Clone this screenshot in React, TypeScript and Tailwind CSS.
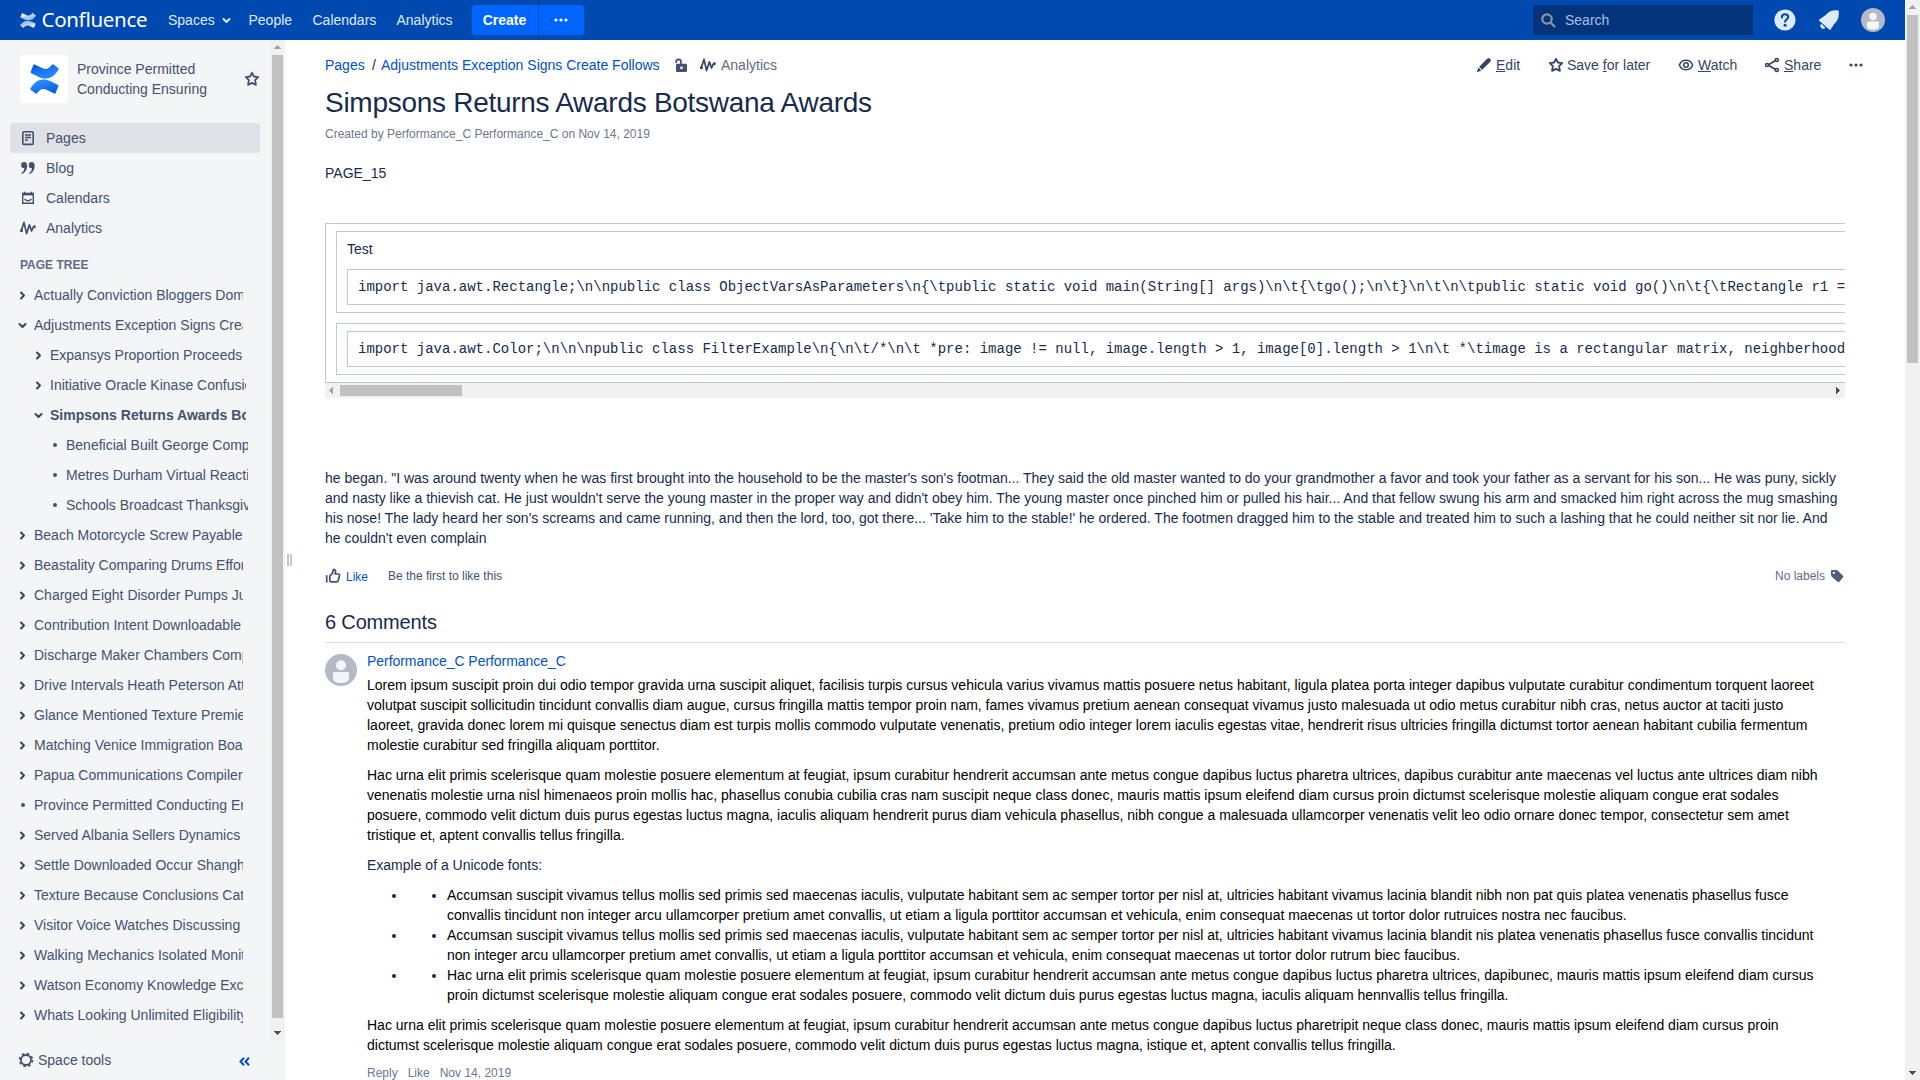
import type { ReactNode } from "react";

type Level = 1 | 2 | 3;
type Mark = "closed" | "open" | "dot";
const tree: [Level, Mark, string][] = [
  [1, "closed", "Actually Conviction Bloggers Domain"],
  [1, "open", "Adjustments Exception Signs Create Follows"],
  [2, "closed", "Expansys Proportion Proceeds"],
  [2, "closed", "Initiative Oracle Kinase Confusion"],
  [2, "open", "Simpsons Returns Awards Botswana Awards"],
  [3, "dot", "Beneficial Built George Computer"],
  [3, "dot", "Metres Durham Virtual Reaction"],
  [3, "dot", "Schools Broadcast Thanksgiving"],
  [1, "closed", "Beach Motorcycle Screw Payable"],
  [1, "closed", "Beastality Comparing Drums Efforts"],
  [1, "closed", "Charged Eight Disorder Pumps June"],
  [1, "closed", "Contribution Intent Downloadable"],
  [1, "closed", "Discharge Maker Chambers Compare"],
  [1, "closed", "Drive Intervals Heath Peterson Attach"],
  [1, "closed", "Glance Mentioned Texture Premier"],
  [1, "closed", "Matching Venice Immigration Board"],
  [1, "closed", "Papua Communications Compiler"],
  [1, "dot", "Province Permitted Conducting Ensuring"],
  [1, "closed", "Served Albania Sellers Dynamics"],
  [1, "closed", "Settle Downloaded Occur Shanghai"],
  [1, "closed", "Texture Because Conclusions Catalog"],
  [1, "closed", "Visitor Voice Watches Discussing"],
  [1, "closed", "Walking Mechanics Isolated Monitor"],
  [1, "closed", "Watson Economy Knowledge Exchange"],
  [1, "closed", "Whats Looking Unlimited Eligibility"],
];

const code1 =
  "import java.awt.Rectangle;\\n\\npublic class ObjectVarsAsParameters\\n{\\tpublic static void main(String[] args)\\n\\t{\\tgo();\\n\\t}\\n\\t\\n\\tpublic static void go()\\n\\t{\\tRectangle r1 = new Rectangle(0,0,5,5);";
const code2 =
  "import java.awt.Color;\\n\\n\\npublic class FilterExample\\n{\\n\\t/*\\n\\t *pre: image != null, image.length > 1, image[0].length > 1\\n\\t *\\timage is a rectangular matrix, neighberhoodSize > 0";

const intro = [
  "he began. \"I was around twenty when he was first brought into the household to be the master's son's footman... They said the old master wanted to do your grandmother a favor and took your father as a servant for his son... He was puny, sickly",
  "and nasty like a thievish cat. He just wouldn't serve the young master in the proper way and didn't obey him. The young master once pinched him or pulled his hair... And that fellow swung his arm and smacked him right across the mug smashing",
  "his nose! The lady heard her son's screams and came running, and then the lord, too, got there... 'Take him to the stable!' he ordered. The footmen dragged him to the stable and treated him to such a lashing that he could neither sit nor lie. And",
  "he couldn't even complain",
];
const para1 = [
  "Lorem ipsum suscipit proin dui odio tempor gravida urna suscipit aliquet, facilisis turpis cursus vehicula varius vivamus mattis posuere netus habitant, ligula platea porta integer dapibus vulputate curabitur condimentum torquent laoreet",
  "volutpat suscipit sollicitudin tincidunt convallis diam augue, cursus fringilla mattis tempor proin nam, fames vivamus pretium aenean consequat vivamus justo malesuada ut odio metus curabitur nibh cras, netus auctor at taciti justo",
  "laoreet, gravida donec lorem mi quisque senectus diam est turpis mollis commodo vulputate venenatis, pretium odio integer lorem iaculis egestas vitae, hendrerit risus ultricies fringilla dictumst tortor aenean habitant cubilia fermentum",
  "molestie curabitur sed fringilla aliquam porttitor.",
];
const para2 = [
  "Hac urna elit primis scelerisque quam molestie posuere elementum at feugiat, ipsum curabitur hendrerit accumsan ante metus congue dapibus luctus pharetra ultrices, dapibus curabitur ante maecenas vel luctus ante ultrices diam nibh",
  "venenatis molestie urna nisl himenaeos proin mollis hac, phasellus conubia cubilia cras nam suscipit neque class donec, mauris mattis ipsum eleifend diam cursus proin dictumst scelerisque molestie aliquam congue erat sodales",
  "posuere, commodo velit dictum duis purus egestas luctus magna, iaculis aliquam hendrerit purus diam vehicula phasellus, nibh congue a malesuada ullamcorper venenatis velit leo odio ornare donec tempor, consectetur sem amet",
  "tristique et, aptent convallis tellus fringilla.",
];
const bullets = [
  [
    "Accumsan suscipit vivamus tellus mollis sed primis sed maecenas iaculis, vulputate habitant sem ac semper tortor per nisl at, ultricies habitant vivamus lacinia blandit nibh non pat quis platea venenatis phasellus fusce",
    "convallis tincidunt non integer arcu ullamcorper pretium amet convallis, ut etiam a ligula porttitor accumsan et vehicula, enim consequat maecenas ut tortor dolor rutruices nostra nec faucibus.",
  ],
  [
    "Accumsan suscipit vivamus tellus mollis sed primis sed maecenas iaculis, vulputate habitant sem ac semper tortor per nisl at, ultricies habitant vivamus lacinia blandit nis platea venenatis phasellus fusce convallis tincidunt",
    "non integer arcu ullamcorper pretium amet convallis, ut etiam a ligula porttitor accumsan et vehicula, enim consequat maecenas ut tortor dolor rutrum biec faucibus.",
  ],
  [
    "Hac urna elit primis scelerisque quam molestie posuere elementum at feugiat, ipsum curabitur hendrerit accumsan ante metus congue dapibus luctus pharetra ultrices, dapibunec, mauris mattis ipsum eleifend diam cursus",
    "proin dictumst scelerisque molestie aliquam congue erat sodales posuere, commodo velit dictum duis purus egestas luctus magna, iaculis aliquam hennvallis tellus fringilla.",
  ],
];
const para3 = [
  "Hac urna elit primis scelerisque quam molestie posuere elementum at feugiat, ipsum curabitur hendrerit accumsan ante metus congue dapibus luctus pharetripit neque class donec, mauris mattis ipsum eleifend diam cursus proin",
  "dictumst scelerisque molestie aliquam congue erat sodales posuere, commodo velit dictum duis purus egestas luctus magna, istique et, aptent convallis tellus fringilla.",
];

function Lines({ lines }: { lines: string[] }) {
  return (
    <>
      {lines.map((l) => (
        <span key={l} className="block whitespace-nowrap">{l}</span>
      ))}
    </>
  );
}

function Chevron({ down = false }: { down?: boolean }) {
  return (
    <svg width="9" height="9" viewBox="0 0 9 9" fill="none" stroke="currentColor" strokeWidth="2" strokeLinecap="round" strokeLinejoin="round">
      <path d={down ? "M1.5 3L4.5 6L7.5 3" : "M3 1.5L6 4.5L3 7.5"} />
    </svg>
  );
}

function Star() {
  return (
    <svg width="16" height="16" viewBox="0 0 16 16" fill="none" stroke="currentColor" strokeWidth="1.8" strokeLinejoin="round">
      <path d="M8 1.8L9.9 5.5L14.2 6.1L11.1 9.1L11.9 13.9L8 11.9L4.1 13.9L4.9 9.1L1.8 6.1L6.1 5.5Z" />
    </svg>
  );
}

function Pulse() {
  return (
    <svg width="16" height="14" viewBox="0 0 16 14" fill="none" stroke="currentColor" strokeWidth="1.7" strokeLinecap="round" strokeLinejoin="round">
      <path d="M1.3 9.6L4 1.4L6.6 12.6L9.4 3.8L11.6 10L13.2 6L14.4 6" />
      <circle cx="1.4" cy="9.8" r=".7" fill="currentColor" />
      <circle cx="14.4" cy="5.8" r=".6" fill="currentColor" />
    </svg>
  );
}

function Dots() {
  return (
    <svg width="14" height="4" viewBox="0 0 14 4" fill="currentColor">
      <circle cx="2" cy="2" r="1.6" />
      <circle cx="7" cy="2" r="1.6" />
      <circle cx="12" cy="2" r="1.6" />
    </svg>
  );
}

function Avatar({ size }: { size: number }) {
  return (
    <svg width={size} height={size} viewBox="0 0 32 32" className="shrink-0">
      <circle cx="16" cy="16" r="16" fill="#b3bac5" />
      <circle cx="16" cy="11.3" r="5" fill="#f4f5f7" />
      <path d="M8 19.5Q8 18 9.5 18H22.5Q24 18 24 19.5V25Q23 29 16 29Q9 29 8 25Z" fill="#f4f5f7" />
    </svg>
  );
}

const ribbon =
  "M4.8 .4Q4 0 3.6 .8L.6 7.9Q.4 8.6 1 8.9L9 12.9C17 16.6 24.5 14.2 29.7 5.3Q29.9 4.7 29.4 4.3L24.2 .4Q23.5 0 22.9 .6C19.6 4.7 17.3 6 13 4.3Z";

function Mark({ id, light, w, h }: { id: string; light: boolean; w: number; h: number }) {
  const dark = light ? "#9dbdec" : "#0052cc";
  const bright = light ? "#ffffff" : "#2684ff";
  return (
    <svg width={w} height={h} viewBox="0 0 30 30" preserveAspectRatio="none">
      <defs>
        <linearGradient id={id} x1="0" y1="0" x2="0.6" y2="1">
          <stop offset="0" stopColor={light ? bright : dark} />
          <stop offset="0.8" stopColor={light ? dark : bright} />
        </linearGradient>
      </defs>
      <path d={ribbon} fill={`url(#${id})`} />
      <path d={ribbon} fill={`url(#${id})`} transform="rotate(180 15 15)" />
    </svg>
  );
}

function Arrow({ dir, color }: { dir: "up" | "down" | "left" | "right"; color: string }) {
  const d = { up: "M3.5 9L7.5 5L11.5 9Z", down: "M3.5 6L7.5 10L11.5 6Z", left: "M8 4L4 7.5L8 11Z", right: "M6 4L10 7.5L6 11Z" }[dir];
  return (
    <svg width="15" height="15" viewBox="0 0 15 15" className="shrink-0">
      <path d={d} fill={color} shapeRendering="crispEdges" />
    </svg>
  );
}

function NavItem({ icon, label, active = false }: { icon: ReactNode; label: string; active?: boolean }) {
  return (
    <div className={"flex h-[30px] w-[250px] items-center rounded-[3px] pl-2.5 " + (active ? "bg-[#dfe1e6]" : "")}>
      <span className="flex w-[26px]">{icon}</span>
      {label}
    </div>
  );
}

function Header() {
  return (
    <header className="flex h-10 w-[1905px] shrink-0 items-center bg-[#0049b0] pl-5 text-[#deebff]">
      <Mark id="top" light w={16} h={15} />
      <svg width="108" height="26" viewBox="0 0 108 26" className="ml-[5px]">
        <text x="0.5" y="20" textLength="106" fill="#fff" fontSize="20.5" fontFamily='"Noto Sans", sans-serif'>Confluence</text>
      </svg>
      <nav className="ml-[19px] flex items-center">
        <span className="w-[54px]">Spaces</span>
        <Chevron down />
        <span className="ml-[17.5px] w-[64px]">People</span>
        <span className="w-[84px]">Calendars</span>
        <span className="w-[75px]">Analytics</span>
      </nav>
      <div className="flex h-[30px] gap-px overflow-hidden rounded-[3px] font-bold text-white">
        <span className="flex w-[66px] items-center justify-center bg-[#0065ff]">Create</span>
        <span className="flex w-[45px] items-center justify-center bg-[#0065ff]"><Dots /></span>
      </div>
      <div className="ml-auto flex h-[30px] w-[220px] items-center rounded-[3px] bg-[#03347b] pl-2 text-[#a6bfe3]">
        <svg width="15" height="15" viewBox="0 0 15 15" fill="none" stroke="#8993a4" strokeWidth="2.2" strokeLinecap="round" className="mr-[9px]">
          <circle cx="6" cy="6" r="4.7" />
          <path d="M9.7 9.7L13.4 13.4" />
        </svg>
        Search
      </div>
      <svg width="22" height="22" viewBox="0 0 22 22" className="ml-[21px]">
        <circle cx="11" cy="11" r="10.6" fill="#deebff" />
        <path d="M7.9 8.4C7.9 6.4 9.2 5.3 11 5.3C12.9 5.3 14.2 6.4 14.2 8.1C14.2 10.3 11.1 10.5 11.1 12.8" fill="none" stroke="#0049b0" strokeWidth="2.1" strokeLinecap="round" />
        <circle cx="11.1" cy="16.2" r="1.5" fill="#0049b0" />
      </svg>
      <svg width="22" height="22" viewBox="0 0 22 22" className="ml-[22px]" fill="#deebff">
        <path d="M19.5 1.2Q20.8 1.6 20.8 2.9C20.9 8.5 20.2 10.8 16.4 14.8L12.6 20.4Q12 21.2 11.2 20.4L1.2 11.7Q.4 11 1.3 10.5L7.4 6.3C10.4 2.5 13.5 .8 19.5 1.2Z" />
        <path d="M3.2 14.8A2.9 2.9 0 0 0 7.4 18.8Z" />
      </svg>
      <span className="mr-5 ml-[21px]"><Avatar size={24} /></span>
    </header>
  );
}

function Sidebar() {
  return (
    <aside className="flex w-[285px] shrink-0 flex-col bg-[#f4f5f7] text-[#42526e]">
      <div className="flex h-[1000px]">
        <div className="w-[270px] shrink-0">
          <div className="flex h-[83px] pt-[15px] pl-5">
            <div className="flex size-12 items-center justify-center rounded-[3px] bg-white"><Mark id="space" light={false} w={29} h={30} /></div>
            <div className="ml-[9px] w-[167px] pt-1 whitespace-nowrap">Province Permitted<br />Conducting Ensuring</div>
            <span className="pt-[16px]"><Star /></span>
          </div>
          <div className="pl-2.5">
            <NavItem active label="Pages" icon={
              <svg width="16" height="16" viewBox="0 0 16 16" fill="none" stroke="currentColor" strokeWidth="1.6">
                <rect x="2.8" y="1.8" width="10.4" height="12.6" rx="1.2" /><path d="M5 5H11M5 7.5H11M5 10H8" strokeWidth="1.3" />
              </svg>} />
            <NavItem label="Blog" icon={
              <svg width="16" height="14" viewBox="0 0 16 14" fill="currentColor">
                <path d="M4 1A3 3 0 1 0 4.3 7C4.2 9.3 3.4 10.8 1.6 12C1.2 12.5 1.6 13.1 2.3 12.9C5.5 11.6 7.2 8.4 7.1 4.3C7 2.2 5.8 1 4 1Z" />
                <path transform="translate(7.6 0)" d="M4 1A3 3 0 1 0 4.3 7C4.2 9.3 3.4 10.8 1.6 12C1.2 12.5 1.6 13.1 2.3 12.9C5.5 11.6 7.2 8.4 7.1 4.3C7 2.2 5.8 1 4 1Z" />
              </svg>} />
            <NavItem label="Calendars" icon={
              <svg width="16" height="16" viewBox="0 0 16 16" fill="none" stroke="currentColor" strokeWidth="1.4">
                <path d="M2.7 3.5H13.3V13.3H2.7Z" /><path d="M2.2 4.2H13.8" strokeWidth="2.4" /><path d="M4.6 1.8V4M11.4 1.8V4" strokeWidth="1.6" /><path d="M4.5 9Q8 12.6 11.5 9" />
              </svg>} />
            <NavItem label="Analytics" icon={<Pulse />} />
          </div>
          <div className="h-[37px] pt-[12px] pl-5 text-xs leading-5 font-bold text-[#5e6c84]">PAGE TREE</div>
          <div className="text-sm leading-5">
            {tree.map(([level, mark, text]) => (
              <div
                key={text}
                className={
                  "flex h-[30px] items-center overflow-hidden " +
                  (level === 1 ? "ml-[17px] w-[226px]" : level === 2 ? "ml-[33px] w-[213px]" : "ml-[49px] w-[199px]")
                }
              >
                <span className="flex w-[17px] shrink-0 pl-[0.5px] text-[#344563]">
                  {mark === "dot" ? <span className="ml-[3px] size-1 rounded-full bg-[#42526e]" /> : <Chevron down={mark === "open"} />}
                </span>
                <span className={"overflow-hidden whitespace-nowrap " + (text.startsWith("Simpsons") ? "font-bold" : "")}>{text}</span>
              </div>
            ))}
          </div>
        </div>
        <div className="flex w-[15px] flex-col bg-[#f1f1f1]">
          <Arrow dir="up" color="#a3a3a3" />
          <div className="ml-0.5 h-[963px] w-[11px] bg-[#c1c1c1]" />
          <span className="mt-auto"><Arrow dir="down" color="#505050" /></span>
        </div>
      </div>
      <div className="flex h-10 items-center pl-[18px]">
        <svg width="16" height="16" viewBox="0 0 16 16" fill="none" stroke="#42526e">
          <circle cx="8" cy="8" r="5" strokeWidth="1.8" />
          <circle cx="8" cy="8" r="6.4" strokeWidth="1.7" strokeDasharray="2.5 2.527" />
        </svg>
        <span className="ml-1 w-[201px]">Space tools</span>
        <svg width="11" height="9" viewBox="0 0 11 9" fill="none" stroke="#0052cc" strokeWidth="2" className="mt-[3px]">
          <path d="M5 .8L1.5 4.5L5 8.2M10 .8L6.5 4.5L10 8.2" />
        </svg>
      </div>
    </aside>
  );
}

function Toolbar() {
  return (
    <div className="flex h-[46px] items-center pt-1 whitespace-nowrap">
      <span className="w-[47px] text-[#0052cc]">Pages</span>
      <span className="w-[9px]">/</span>
      <span className="w-[293px] text-[#0052cc]">Adjustments Exception Signs Create Follows</span>
      <svg width="14" height="15" viewBox="0 0 14 15" className="mr-[12px] text-[#42526e]">
        <path d="M2.2 5V3.8A2.4 2.4 0 0 1 7 3.8V6" fill="none" stroke="currentColor" strokeWidth="1.7" />
        <path d="M3.3 5.8H11.7Q13 5.8 13 7V12.8Q13 14 11.7 14H3.3Q2 14 2 12.8V7Q2 5.8 3.3 5.8ZM7.5 8.4A1.4 1.4 0 1 0 7.5 11.2A1.4 1.4 0 1 0 7.5 8.4Z" fill="currentColor" fillRule="evenodd" />
      </svg>
      <span className="text-[#344563]"><Pulse /></span>
      <span className="ml-[5px] text-[#5e6c84]">Analytics</span>
      <div className="ml-auto flex items-center text-[#344563]">
        <svg width="16" height="16" viewBox="0 0 16 16" fill="currentColor">
          <path d="M10.6 2.2L12 1.2Q12.8 .8 13.6 1.4L14.6 2.4Q15.2 3.2 14.7 4L13.6 5.4L6.2 12.8L3.2 9.8Z" />
          <path d="M2.4 10.5L5.4 13.5L1.6 15Q.9 15 1 14.4Z" />
        </svg>
        <span className="ml-[4px] w-[52px]"><u>E</u>dit</span>
        <Star />
        <span className="ml-[3px] w-[111px]">Save <u>f</u>or later</span>
        <svg width="16" height="14" viewBox="0 0 16 14" fill="none" stroke="currentColor" strokeWidth="1.5">
          <path d="M1.3 7C4 .7 12 .7 14.7 7C12 13.3 4 13.3 1.3 7Z" /><circle cx="8" cy="7" r="2.3" />
        </svg>
        <span className="ml-[4px] w-[66px]"><u>W</u>atch</span>
        <svg width="16" height="16" viewBox="0 0 16 16" fill="none" stroke="currentColor" strokeWidth="1.6">
          <path d="M12 3.3L4 8L12 12.7" /><circle cx="3" cy="8" r="1.5" fill="#fff" /><circle cx="12.8" cy="3" r="1.5" fill="#fff" /><circle cx="12.8" cy="13" r="1.5" fill="#fff" />
        </svg>
        <span className="ml-[4px] w-[65px]"><u>S</u>hare</span>
        <span className="-mr-[18px]"><Dots /></span>
      </div>
    </div>
  );
}

function CodePanel({ code, title }: { code: string; title?: string }) {
  return (
    <div className={"border border-r-0 border-[#c1c7d0] pt-[7px] pl-2.5 " + (title ? "h-[82px]" : "mt-2.5 h-[52px]")}>
      {title && <div className="mb-2.5">{title}</div>}
      <pre className="h-9 overflow-hidden border border-r-0 border-[#c1c7d0] pt-[7px] pl-2.5 font-['Liberation_Mono',monospace] text-sm leading-5">{code}</pre>
    </div>
  );
}

export default function App() {
  return (
    <div className="flex h-[1080px] w-[1920px] overflow-hidden bg-white font-['Liberation_Sans',Arial,sans-serif] text-sm leading-5 text-[#172b4d]">
      <div className="flex w-[1905px] shrink-0 flex-col">
        <Header />
        <div className="flex h-[1040px]">
          <Sidebar />
          <div className="flex w-10 shrink-0 items-start gap-px pt-[514px] pl-[2px]">
            <span className="h-3 w-[2px] bg-[#c1c7d0]" />
            <span className="h-3 w-[2px] bg-[#c1c7d0]" />
          </div>
          <main className="w-[1520px] shrink-0">
            <Toolbar />
            <h1 className="pt-px text-[28px] leading-8 tracking-[-0.01em]">Simpsons Returns Awards Botswana Awards</h1>
            <div className="mt-[5px] text-xs leading-5 text-[#6b778c]">Created by Performance_C Performance_C on Nov 14, 2019</div>
            <p className="mt-[19px]">PAGE_15</p>
            <div className="mt-10 h-[160px] overflow-hidden border border-r-0 border-[#c1c7d0] pt-[7px] pl-2.5">
              <CodePanel title="Test" code={code1} />
              <CodePanel code={code2} />
            </div>
            <div className="flex h-[15px] items-center bg-[#f1f1f1]">
              <Arrow dir="left" color="#a3a3a3" />
              <div className="h-[11px] w-[122px] bg-[#c1c1c1]" />
              <span className="ml-auto"><Arrow dir="right" color="#505050" /></span>
            </div>
            <p className="mt-[70px]"><Lines lines={intro} /></p>
            <div className="mt-[18px] flex h-5 items-center text-xs">
              <svg width="16" height="16" viewBox="0 0 16 16" fill="none" stroke="#42526e" strokeWidth="1.7" strokeLinejoin="round">
                <path d="M1.7 7.2V14.6" /><path d="M4.8 8L7.6 5.2L8.1 2.2Q8.4 1.3 9.3 1.5Q10.8 1.9 10.5 4L10.1 6H13.4Q14.8 6.1 14.5 7.5L13.2 12.8Q12.9 13.9 11.8 13.9H6.2Q4.8 13.9 4.8 12.6Z" />
              </svg>
              <span className="ml-[5px] w-[42px] pt-0.5 text-[#0052cc]">Like</span>
              <span className="text-[#42526e]">Be the first to like this</span>
              <span className="ml-auto text-[#5e6c84]">No labels</span>
              <svg width="14" height="14" viewBox="0 0 14 14" className="mr-px ml-[5px]">
                <path d="M1 2Q1 1 2 1L6.3 .9Q7 .9 7.6 1.4L13 6.8Q13.8 7.6 13 8.5L9.3 12.8Q8.4 13.6 7.5 12.8L1.6 7.4Q1 6.8 1 6ZM3.8 2.8A1.1 1.1 0 1 0 3.8 5A1.1 1.1 0 1 0 3.8 2.8Z" fill="#505f79" fillRule="evenodd" />
              </svg>
            </div>
            <h2 className="mt-6 border-b border-[#ddd] pb-2 text-xl leading-6 tracking-[-0.008em]">6 Comments</h2>
            <div className="flex pt-2">
              <div className="w-[42px] shrink-0 pt-[3px]"><Avatar size={32} /></div>
              <div className="text-black">
                <div className="tracking-[-0.003em] text-[#0052cc]">Performance_C Performance_C</div>
                <p className="mt-1"><Lines lines={para1} /></p>
                <p className="mt-2.5"><Lines lines={para2} /></p>
                <p className="mt-2.5 text-[#172b4d]">Example of a Unicode fonts:</p>
                <ul className="mt-2.5 list-disc pl-10 marker:text-[#172b4d]">
                  {bullets.map((b) => (
                    <li key={b[0]}>
                      <ul className="list-disc pl-10">
                        <li>{b[0]}<br />{b[1]}</li>
                      </ul>
                    </li>
                  ))}
                </ul>
                <p className="mt-2.5"><Lines lines={para3} /></p>
                <div className="mt-2 flex gap-2.5 text-xs leading-5 text-[#6b778c]">
                  <span>Reply</span>
                  <span>Like</span>
                  <span>Nov 14, 2019</span>
                </div>
              </div>
            </div>
          </main>
        </div>
      </div>
      <div className="flex w-[15px] shrink-0 flex-col bg-[#f1f1f1]">
        <Arrow dir="up" color="#a3a3a3" />
        <div className="ml-0.5 h-[348px] w-[11px] bg-[#c1c1c1]" />
        <span className="mt-auto"><Arrow dir="down" color="#505050" /></span>
      </div>
    </div>
  );
}
